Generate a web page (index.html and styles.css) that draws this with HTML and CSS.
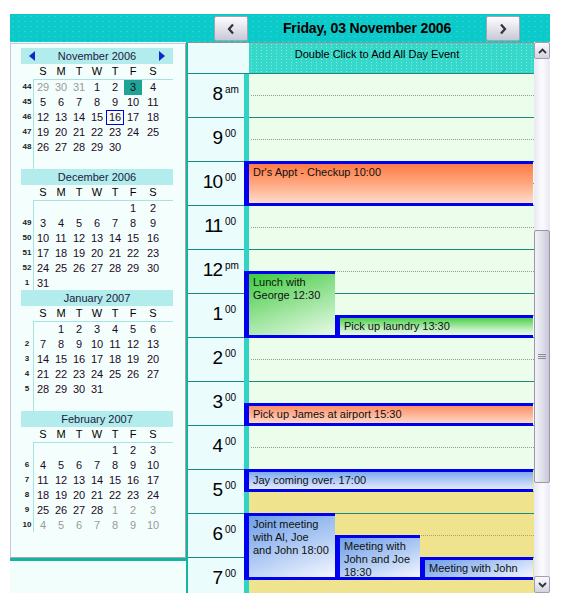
FILE: index.html
```html
<!DOCTYPE html>
<html>
<head>
<meta charset="utf-8">
<link rel="stylesheet" href="styles.css">
</head>
<body>
<div class="app">
  <div class="topbar">
    <div class="nav-btn"><svg width="8" height="12" viewBox="0 0 8 12"><path d="M6 1.5 L2 6 L6 10.5" fill="none" stroke="#333" stroke-width="2.2"/></svg></div>
    <div class="title">Friday, 03 November 2006</div>
    <div class="nav-btn"><svg width="8" height="12" viewBox="0 0 8 12"><path d="M2 1.5 L6 6 L2 10.5" fill="none" stroke="#333" stroke-width="2.2"/></svg></div>
  </div>
  <div class="main">
    <div class="side">
      <div class="cals">
        <div class="mc">
          <div class="mc-head">
            <svg class="arr" width="6" height="10" viewBox="0 0 6 10"><path d="M6 0 L0 5 L6 10Z" fill="#1428c8"/></svg>
            <span>November 2006</span>
            <svg class="arr" width="6" height="10" viewBox="0 0 6 10"><path d="M0 0 L6 5 L0 10Z" fill="#1428c8"/></svg>
          </div>
          <div class="mc-dow"><span></span><div class="dow"><b>S</b><b>M</b><b>T</b><b>W</b><b>T</b><b>F</b><b>S</b></div></div>
          <div class="mc-body">
            <div class="wk"><i>44</i><i>45</i><i>46</i><i>47</i><i>48</i><i></i></div>
            <div class="dates">
              <span class="om">29</span><span class="om">30</span><span class="om">31</span><span>1</span><span>2</span><span class="sel">3</span><span>4</span>
              <span>5</span><span>6</span><span>7</span><span>8</span><span>9</span><span>10</span><span>11</span>
              <span>12</span><span>13</span><span>14</span><span>15</span><span class="today">16</span><span>17</span><span>18</span>
              <span>19</span><span>20</span><span>21</span><span>22</span><span>23</span><span>24</span><span>25</span>
              <span>26</span><span>27</span><span>28</span><span>29</span><span>30</span>
            </div>
          </div>
        </div>
        <div class="mc">
          <div class="mc-head"><span>December 2006</span></div>
          <div class="mc-dow"><span></span><div class="dow"><b>S</b><b>M</b><b>T</b><b>W</b><b>T</b><b>F</b><b>S</b></div></div>
          <div class="mc-body">
            <div class="wk"><i></i><i>49</i><i>50</i><i>51</i><i>52</i><i>1</i></div>
            <div class="dates">
              <span></span><span></span><span></span><span></span><span></span><span>1</span><span>2</span>
              <span>3</span><span>4</span><span>5</span><span>6</span><span>7</span><span>8</span><span>9</span>
              <span>10</span><span>11</span><span>12</span><span>13</span><span>14</span><span>15</span><span>16</span>
              <span>17</span><span>18</span><span>19</span><span>20</span><span>21</span><span>22</span><span>23</span>
              <span>24</span><span>25</span><span>26</span><span>27</span><span>28</span><span>29</span><span>30</span>
              <span>31</span>
            </div>
          </div>
        </div>
        <div class="mc">
          <div class="mc-head"><span>January 2007</span></div>
          <div class="mc-dow"><span></span><div class="dow"><b>S</b><b>M</b><b>T</b><b>W</b><b>T</b><b>F</b><b>S</b></div></div>
          <div class="mc-body">
            <div class="wk"><i></i><i>2</i><i>3</i><i>4</i><i>5</i><i></i></div>
            <div class="dates">
              <span></span><span>1</span><span>2</span><span>3</span><span>4</span><span>5</span><span>6</span>
              <span>7</span><span>8</span><span>9</span><span>10</span><span>11</span><span>12</span><span>13</span>
              <span>14</span><span>15</span><span>16</span><span>17</span><span>18</span><span>19</span><span>20</span>
              <span>21</span><span>22</span><span>23</span><span>24</span><span>25</span><span>26</span><span>27</span>
              <span>28</span><span>29</span><span>30</span><span>31</span>
            </div>
          </div>
        </div>
        <div class="mc">
          <div class="mc-head"><span>February 2007</span></div>
          <div class="mc-dow"><span></span><div class="dow"><b>S</b><b>M</b><b>T</b><b>W</b><b>T</b><b>F</b><b>S</b></div></div>
          <div class="mc-body">
            <div class="wk"><i></i><i>6</i><i>7</i><i>8</i><i>9</i><i>10</i></div>
            <div class="dates">
              <span></span><span></span><span></span><span></span><span>1</span><span>2</span><span>3</span>
              <span>4</span><span>5</span><span>6</span><span>7</span><span>8</span><span>9</span><span>10</span>
              <span>11</span><span>12</span><span>13</span><span>14</span><span>15</span><span>16</span><span>17</span>
              <span>18</span><span>19</span><span>20</span><span>21</span><span>22</span><span>23</span><span>24</span>
              <span>25</span><span>26</span><span>27</span><span>28</span><span class="om">1</span><span class="om">2</span><span class="om">3</span>
              <span class="om">4</span><span class="om">5</span><span class="om">6</span><span class="om">7</span><span class="om">8</span><span class="om">9</span><span class="om">10</span>
            </div>
          </div>
        </div>
      </div>
      <div class="side-foot"></div>
    </div>
    <div class="dayview">
      <div class="allday-row">
        <div class="corner"></div>
        <div class="allday">Double Click to Add All Day Event</div>
      </div>
      <div class="dbody">
        <div class="times">
          <div class="trow"><span class="tnum">8</span><span class="tsup">am</span></div>
          <div class="trow"><span class="tnum">9</span><span class="tsup">00</span></div>
          <div class="trow"><span class="tnum">10</span><span class="tsup">00</span></div>
          <div class="trow"><span class="tnum">11</span><span class="tsup">00</span></div>
          <div class="trow"><span class="tnum">12</span><span class="tsup">pm</span></div>
          <div class="trow"><span class="tnum">1</span><span class="tsup">00</span></div>
          <div class="trow"><span class="tnum">2</span><span class="tsup">00</span></div>
          <div class="trow"><span class="tnum">3</span><span class="tsup">00</span></div>
          <div class="trow"><span class="tnum">4</span><span class="tsup">00</span></div>
          <div class="trow"><span class="tnum">5</span><span class="tsup">00</span></div>
          <div class="trow"><span class="tnum">6</span><span class="tsup">00</span></div>
          <div class="trow"><span class="tnum">7</span><span class="tsup">00</span></div>
        </div>
        <div class="lane">
          <div class="strip"></div>
          <div class="day">
            <div class="drow"></div>
            <div class="drow"></div>
            <div class="drow"></div>
            <div class="drow"></div>
            <div class="drow"></div>
            <div class="drow"></div>
            <div class="drow"></div>
            <div class="drow"></div>
            <div class="drow"></div>
            <div class="drow off"></div>
            <div class="drow off"></div>
            <div class="drow off"></div>
          </div>
          <div class="ev orange" style="top:88px;height:45px;left:0;right:1px">Dr's Appt - Checkup 10:00</div>
          <div class="ev green" style="top:198px;height:67px;left:0;width:91px">Lunch with George 12:30</div>
          <div class="ev green2" style="top:242px;height:23px;left:91px;right:1px">Pick up laundry 13:30</div>
          <div class="ev orange2" style="top:330px;height:23px;left:0;right:1px">Pick up James at airport 15:30</div>
          <div class="ev blue" style="top:396px;height:23px;left:0;right:1px">Jay coming over. 17:00</div>
          <div class="ev blue2" style="top:440px;height:67px;left:0;width:91px">Joint meeting with Al, Joe and John 18:00</div>
          <div class="ev blue2" style="top:462px;height:45px;left:91px;width:85px">Meeting with John and Joe 18:30</div>
          <div class="ev blue2" style="top:484px;height:23px;left:176px;right:1px">Meeting with John</div>
        </div>
      </div>
    </div>
    <div class="scroll">
      <div class="sb-btn"><svg width="9" height="6" viewBox="0 0 9 6"><path d="M1 5 L4.5 1.5 L8 5" fill="none" stroke="#333" stroke-width="1.8"/></svg></div>
      <div class="sb-track"><div class="sb-thumb"><div class="grip"></div></div></div>
      <div class="sb-btn"><svg width="9" height="6" viewBox="0 0 9 6"><path d="M1 1 L4.5 4.5 L8 1" fill="none" stroke="#333" stroke-width="1.8"/></svg></div>
    </div>
  </div>
</div>
</body>
</html>
```
FILE: styles.css
```css
* { box-sizing: border-box; }
body { margin: 0; background: #fff; font-family: "Liberation Sans", Arial, sans-serif; color: #000; }
.app { margin: 14px 0 0 10px; width: 540px; }

.topbar { height: 28px; background-color: #0ccaca; background-image: radial-gradient(circle, rgba(255,255,255,.14) 0 0.6px, transparent 0.8px); background-size: 6px 5px; display: flex; align-items: flex-start; padding: 2px 0 0 204px; }
.nav-btn { width: 34px; height: 25px; border: 1px solid #a4a4ae; border-radius: 2px; background: linear-gradient(#fdfdff, #e6e6ee 45%, #c8c8d8); display: flex; align-items: center; justify-content: center; }
.title { width: 238px; text-align: center; font-weight: bold; font-size: 14px; line-height: 25px; letter-spacing: -0.15px; color: #000; }

.main { display: flex; height: 551px; }

.side { width: 178px; border-right: 2px solid #14b4a4; display: flex; flex-direction: column; background: #f2fefc; }
.cals { height: 515px; margin-top: 1px; border: 1px solid #c4cce4; border-right-color: #a8a8a8; border-bottom-color: #a8a8a8; padding: 4px 0 0 10px; background: #f4fffd; }
.side-foot { flex: 1; border-top: 3px solid #14b4a4; background: #f2fefc; }

.mc { width: 152px; font-size: 11px; }
.mc-head { height: 16px; background: #b2ecec; display: flex; align-items: center; justify-content: center; position: relative; color: #202040; }
.mc-head .arr { position: absolute; top: 3px; }
.mc-head .arr:first-child { left: 8px; }
.mc-head .arr:last-child { right: 8px; }
.mc-dow { display: flex; height: 15px; }
.mc-dow > span { width: 13px; }
.dow { display: grid; grid-template-columns: repeat(6, 18px) 22px; }
.dow b { font-weight: normal; text-align: center; line-height: 15px; }
.mc-body { display: flex; height: 90px; }
.wk { width: 12px; display: flex; flex-direction: column; }
.wk i { height: 15px; font-style: normal; font-weight: bold; font-size: 8px; line-height: 15px; text-align: center; color: #202020; }
.dates { width: 140px; border-left: 1px solid #a8e2e2; border-top: 1px solid #a8e2e2; display: grid; grid-template-columns: repeat(6, 18px) 22px; grid-auto-rows: 15px; align-content: start; }
.dates span { text-align: center; line-height: 15px; color: #1e0a24; }
.dates .om { color: #999; }
.dates .sel { background: #1fa394; }
.dates .today { border: 1px solid #0000e0; line-height: 13px; }

.dayview { width: 346px; border-top: 1px solid #8c9494; display: flex; flex-direction: column; }
.allday-row { height: 30px; display: flex; }
.corner { width: 61px; background: #eafcfc; }
.allday { flex: 1; background-color: #36d8ca; background-image: radial-gradient(circle, rgba(255,255,255,.4) 0 0.6px, transparent 0.8px); background-size: 5px 3px; font-size: 11px; text-align: center; padding: 4px 29px 0 0; line-height: 14px; }

.dbody { display: flex; height: 520px; overflow: hidden; }
.times { width: 56px; background: #eafcfc; flex: none; }
.trow { height: 44px; border-top: 1px solid #1a8a80; display: flex; }
.tnum { width: 34px; text-align: right; font-size: 19px; line-height: 20px; padding-top: 10px; letter-spacing: -1px; }
.tsup { margin-left: 3px; font-size: 10px; line-height: 10px; padding-top: 11px; }

.lane { position: relative; display: flex; flex: 1; }
.strip { width: 5px; background: #30d4c4; border-top: 1px solid #1a8a80; }
.day { flex: 1; }
.drow { height: 44px; border-top: 1px solid #1a8a80; position: relative; background: #edfdeb; }
.drow::after { content: ""; position: absolute; left: 2px; right: 0; top: 21px; border-top: 1px dotted #9a9a9a; }
.drow.off { background: #f0e38e; }
.drow.off::after { border-top-color: #b0a070; }

.ev { position: absolute; border: 3px solid #0000f0; border-left-width: 5px; border-right: 0; padding: 2px 5px 0 4px; font-size: 11px; line-height: 13px; overflow: hidden; color: #101010; }
.orange { background: linear-gradient(#ff7a45, #ffa880 50%, #ffdcca); }
.orange2 { background: linear-gradient(#ff8e66, #ffd8c6); }
.green { background: linear-gradient(160deg, #3ccc3c, #8ee08e 45%, #e8fae8); }
.green2 { background: linear-gradient(#4ccf4c, #c8f2c8 70%, #eafbea); }
.blue { background: linear-gradient(#7eaaf0, #e2ecff); }
.blue2 { background: linear-gradient(160deg, #6c9ee8, #b4cdf4 55%, #f4f7ff); }

.scroll { width: 16px; display: flex; flex-direction: column; background: linear-gradient(90deg, #e8e8f2, #fbfbff 50%, #e8e8f2); }
.sb-btn { height: 17px; border: 1px solid #a0a0b0; border-radius: 2px; background: linear-gradient(#fafafe, #d4d4e0); display: flex; align-items: center; justify-content: center; flex: none; }
.sb-track { flex: 1; padding-top: 171px; }
.sb-thumb { height: 253px; border: 1px solid #9898a8; border-radius: 2px; background: linear-gradient(90deg, #f2f2f8, #e0e0ea 50%, #c8c8d8); display: flex; align-items: center; justify-content: center; }
.grip { width: 8px; height: 5px; border-top: 1px solid #8a8a9a; border-bottom: 1px solid #8a8a9a; position: relative; }
.grip::after { content: ""; position: absolute; left: 0; right: 0; top: 1px; border-top: 1px solid #8a8a9a; }
```
